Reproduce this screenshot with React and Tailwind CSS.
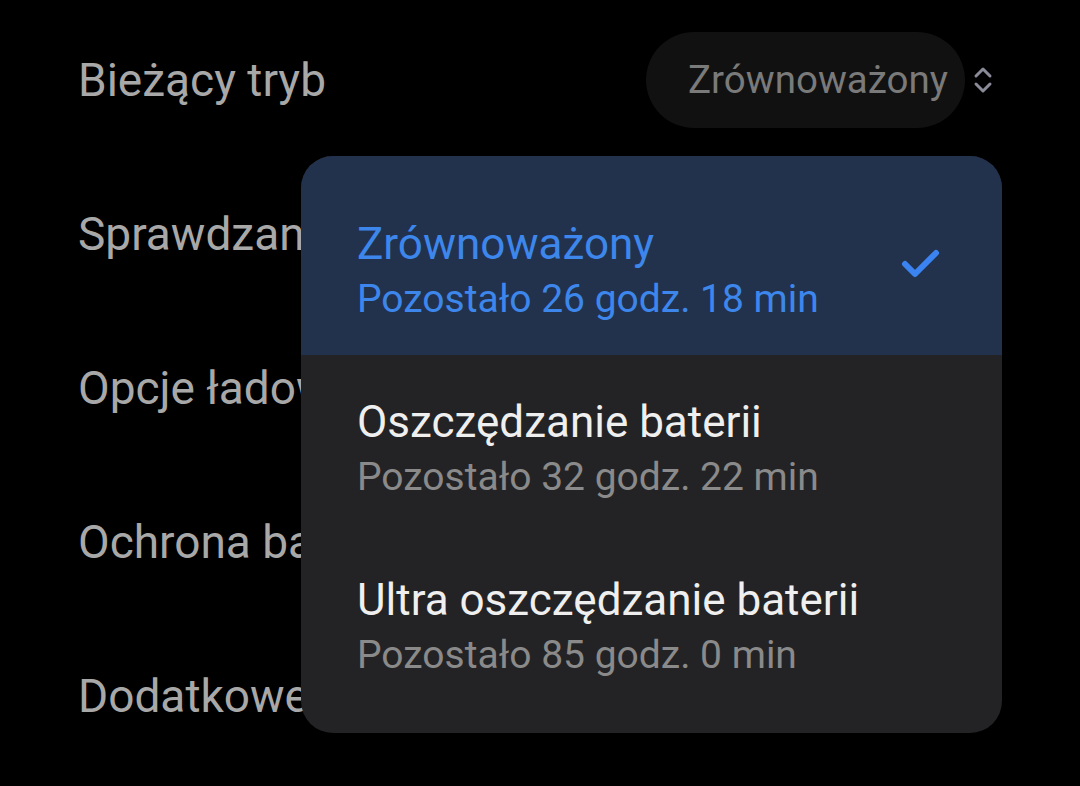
import React from "react";

const rows = [
  "Bieżący tryb",
  "Sprawdzanie baterii",
  "Opcje ładowania",
  "Ochrona baterii",
  "Dodatkowe ustawienia",
];

const options = [
  { title: "Zrównoważony", sub: "Pozostało 26 godz. 18 min", active: true },
  { title: "Oszczędzanie baterii", sub: "Pozostało 32 godz. 22 min" },
  { title: "Ultra oszczędzanie baterii", sub: "Pozostało 85 godz. 0 min" },
];

export default function App() {
  return (
    <div
      className="relative w-[1080px] h-[786px] bg-black overflow-hidden"
      style={{ fontFamily: "Roboto, 'Noto Sans', sans-serif" }}
    >
      <div className="flex flex-col pt-[3px]">
        {rows.map((r, i) => (
          <div key={i} className="h-[154px] flex items-center justify-between pl-[78px] pr-[87px]">
            <span className="text-[46px] text-[#a8a8a8] whitespace-nowrap">{r}</span>
            {i === 0 && (
              <div className="flex items-center gap-[8px]">
                <div className="h-[96px] w-[319px] rounded-full bg-[#111111] flex items-center justify-end pr-[17px]">
                  <span className="text-[38.5px] text-[#7a7a7a]">Zrównoważony</span>
                </div>
                <svg width="20" height="30" viewBox="0 0 20 30" fill="none">
                  <path d="M3 11 L10 4 L17 11" stroke="#8a8a98" strokeWidth="3" strokeLinecap="round" strokeLinejoin="round" />
                  <path d="M3 19 L10 26 L17 19" stroke="#8a8a98" strokeWidth="3" strokeLinecap="round" strokeLinejoin="round" />
                </svg>
              </div>
            )}
          </div>
        ))}
      </div>

      <div className="absolute left-[301px] top-[156px] w-[701px] h-[577px] rounded-[32px] bg-[#232325] overflow-hidden pb-[22px] flex flex-col">
        {options.map((o, i) => (
          <div
            key={i}
            className={
              "flex items-center justify-between pl-[56px] pr-[60px] " +
              (o.active ? "bg-[#22324d] h-[199px] pt-[31px]" : "h-[178px] pt-[10px]")
            }
          >
            <div className="flex flex-col gap-[3px]">
              <span className={"text-[44px] leading-[52px] whitespace-nowrap " + (o.active ? "text-[#3d87ec]" : "text-[#efefef]")}>
                {o.title}
              </span>
              <span className={"text-[39px] leading-[52px] whitespace-nowrap " + (o.active ? "text-[#3d87ec]" : "text-[#8a8a8a]")}>
                {o.sub}
              </span>
            </div>
            {o.active && (
              <svg width="44" height="36" viewBox="0 0 44 36" fill="none" className="-mt-[14px] mr-[-1px]">
                <path d="M6 18 L16 28 L37 7" stroke="#3a83f0" strokeWidth="6" strokeLinecap="round" strokeLinejoin="round" />
              </svg>
            )}
          </div>
        ))}
      </div>
    </div>
  );
}
